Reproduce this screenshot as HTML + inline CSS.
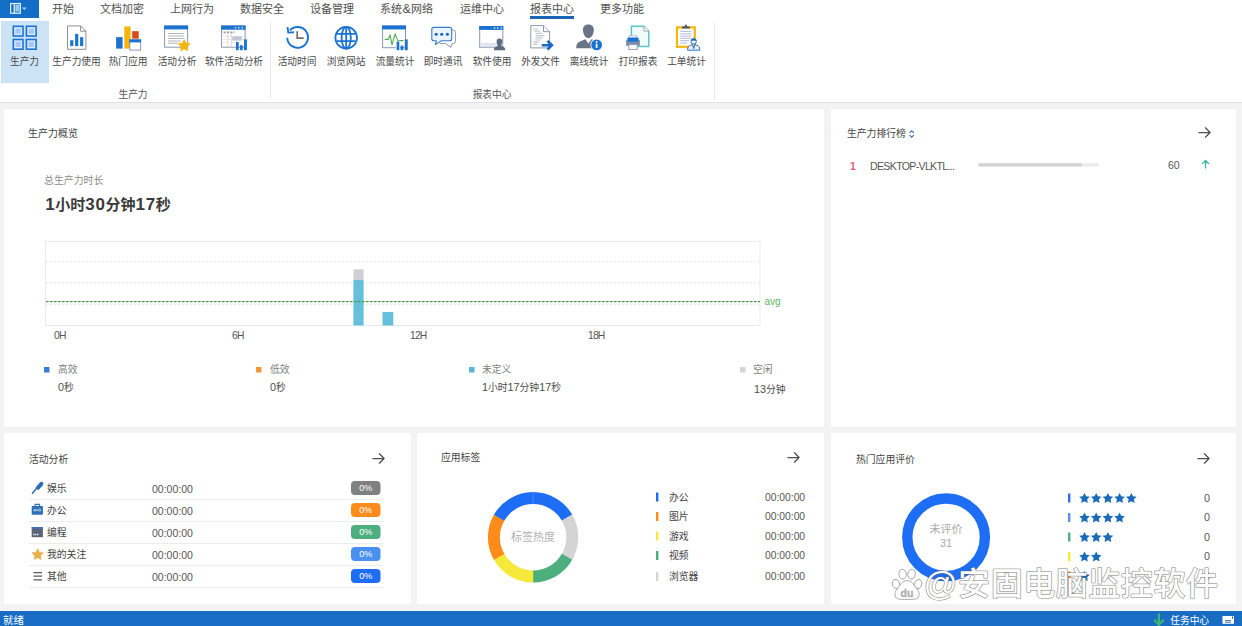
<!DOCTYPE html>
<html lang="zh-CN">
<head>
<meta charset="utf-8">
<title>生产力</title>
<style>
*{box-sizing:border-box;margin:0;padding:0}
html,body{width:1242px;height:626px;overflow:hidden;background:#f3f3f3}
body{position:relative;font-family:"Liberation Sans","Noto Sans CJK SC",sans-serif;color:#444;font-size:10px}
.t{position:absolute;white-space:nowrap;line-height:1}
.c{transform:translateX(-50%)}
.abs{position:absolute}
#menubar{position:absolute;left:0;top:0;width:1242px;height:19px;background:#fff}
#appbtn{position:absolute;left:0;top:0;width:39.3px;height:18.1px;background:#146dc6}
#ribbon{position:absolute;left:0;top:19px;width:1242px;height:83.8px;background:#fff;border-bottom:1px solid #e0e0e0}
.menu{font-size:11px;color:#505050;top:3.5px}
.rl{font-size:9.7px;color:#4a4a4a;top:56.8px}
.gl{font-size:9.7px;color:#555;top:90px}
.panel{position:absolute;background:#fff}
.pt{font-size:10px;color:#444}
#status{position:absolute;left:0;top:611px;width:1242px;height:15px;background:#186cc4}
svg{position:absolute;left:0;top:0;overflow:visible}
.ax{top:331px;font-size:10.3px;letter-spacing:-.8px;color:#555}
.lg{top:365px;font-size:9.8px;color:#808080}
.lv{top:382px;font-size:9.8px;color:#4d4d4d}
.hd{font-size:15px;font-weight:700;color:#3a3a3a;line-height:20px}
.hd b{font-size:17px;letter-spacing:.65px;font-weight:700}
.wm{font-family:"Noto Sans CJK SC",sans-serif;font-size:32px;letter-spacing:.55px;font-weight:500;color:#fff;-webkit-text-stroke:1px rgba(120,120,120,.8);paint-order:stroke fill;text-shadow:0 0 1.5px rgba(0,0,0,.35);line-height:34px}
i{font-style:normal;font-size:1.1em}
</style>
</head>
<body>
<!-- MENUBAR -->
<div id="menubar"></div>
<div id="appbtn"></div>
<div class="t menu" style="left:52px">开始</div>
<div class="t menu" style="left:100px">文档加密</div>
<div class="t menu" style="left:170px">上网行为</div>
<div class="t menu" style="left:240px">数据安全</div>
<div class="t menu" style="left:310px">设备管理</div>
<div class="t menu" style="left:380px">系统<span style="font-size:12.4px;line-height:0;margin:0 .3px 0 .5px">&amp;</span>网络</div>
<div class="t menu" style="left:460px">运维中心</div>
<div class="t menu" style="left:530px">报表中心</div>
<div class="t menu" style="left:600px">更多功能</div>
<div class="abs" style="left:530px;top:16px;width:44px;height:2.7px;background:#1a66b5"></div>
<!-- RIBBON -->
<div id="ribbon"></div>
<div class="abs" style="left:1px;top:21px;width:48px;height:62.4px;background:#cce3f6"></div>
<div class="abs" style="left:270px;top:22px;width:1px;height:78px;background:#ebebeb"></div>
<div class="abs" style="left:714px;top:22px;width:1px;height:78px;background:#ebebeb"></div>
<div class="t rl c" style="left:24.5px">生产力</div>
<div class="t rl c" style="left:76.5px">生产力使用</div>
<div class="t rl c" style="left:128px">热门应用</div>
<div class="t rl c" style="left:177px">活动分析</div>
<div class="t rl c" style="left:234px">软件活动分析</div>
<div class="t rl c" style="left:297px">活动时间</div>
<div class="t rl c" style="left:346px">浏览网站</div>
<div class="t rl c" style="left:395px">流量统计</div>
<div class="t rl c" style="left:443px">即时通讯</div>
<div class="t rl c" style="left:492px">软件使用</div>
<div class="t rl c" style="left:540.5px">外发文件</div>
<div class="t rl c" style="left:589px">离线统计</div>
<div class="t rl c" style="left:638px">打印报表</div>
<div class="t rl c" style="left:686.5px">工单统计</div>
<div class="t gl c" style="left:133px">生产力</div>
<div class="t gl c" style="left:492px">报表中心</div>
<!-- PANELS -->
<div class="panel" style="left:4px;top:109px;width:820px;height:318px"></div>
<div class="panel" style="left:831px;top:109px;width:404.5px;height:318px"></div>
<div class="panel" style="left:4px;top:433px;width:407px;height:171px"></div>
<div class="panel" style="left:417px;top:433px;width:407px;height:171px"></div>
<div class="panel" style="left:831px;top:433px;width:404.5px;height:171.4px"></div>
<!-- STATUS -->
<div id="status"></div>
<div class="t" style="left:3px;top:615px;font-size:10.5px;color:#fff">就绪</div>
<div class="t" style="left:1170.3px;top:615.8px;font-size:9.7px;color:#fff">任务中心</div>
<svg width="1242" height="626" viewBox="0 0 1242 626">
<path d="M1158.9 613.6V624.6M1154.2 619.6L1158.9 625L1163.6 619.6" fill="none" stroke="#3db86f" stroke-width="2.2" stroke-linejoin="miter"/>
<rect x="1222.5" y="616" width="11.5" height="7.8" fill="#fff"/>
<path d="M1225 620.6H1231M1225 622.2H1231" stroke="#1b4f9a" stroke-width=".8"/><rect x="1232" y="616.6" width="1" height="2" fill="#1b3f80"/>
</svg>
<!--P1-->
<div class="t pt" style="left:28px;top:129.2px">生产力概览</div>
<div class="t" style="left:44px;top:176.3px;font-size:9.9px;color:#8c8c8c">总生产力时长</div>
<div class="t hd" style="left:45.2px;top:194.5px"><b>1</b>小时<b>30</b>分钟<b>17</b>秒</div>
<svg width="1242" height="626" viewBox="0 0 1242 626">
<rect x="45.5" y="241.5" width="714.5" height="84" fill="#fff" stroke="#ebebeb" stroke-width="1"/>
<line x1="46" y1="261.8" x2="760" y2="261.8" stroke="#e4e4e4" stroke-width="1" stroke-dasharray="2.2 1.8"/>
<line x1="46" y1="282.9" x2="760" y2="282.9" stroke="#e4e4e4" stroke-width="1" stroke-dasharray="2.2 1.8"/>
<line x1="46" y1="304.3" x2="760" y2="304.3" stroke="#e4e4e4" stroke-width="1" stroke-dasharray="2.2 1.8"/>
<rect x="353.4" y="269.4" width="10.2" height="10.6" fill="#d0d0d4"/>
<rect x="353.4" y="280" width="10.2" height="45.5" fill="#66c0dc"/>
<rect x="382.5" y="312" width="10.8" height="13.5" fill="#66c0dc"/>
<line x1="46" y1="301.5" x2="760" y2="301.5" stroke="#43a047" stroke-width="1.25" stroke-dasharray="2.6 1.4"/>
<rect x="44" y="367" width="5.5" height="5.5" fill="#3a7bd5"/>
<rect x="256" y="367" width="5.5" height="5.5" fill="#f0963c"/>
<rect x="469" y="367" width="5.5" height="5.5" fill="#5ab4d6"/>
<rect x="740" y="367" width="5.5" height="5.5" fill="#d4d4d4"/>
</svg>
<div class="t" style="left:764.5px;top:297.2px;font-size:10px;color:#5cb85c">avg</div>
<div class="t ax" style="left:54px">0H</div>
<div class="t ax" style="left:232px">6H</div>
<div class="t ax" style="left:410px">12H</div>
<div class="t ax" style="left:588px">18H</div>
<div class="t lg" style="left:58px">高效</div>
<div class="t lv" style="left:58px"><i>0</i>秒</div>
<div class="t lg" style="left:270px">低效</div>
<div class="t lv" style="left:270px"><i>0</i>秒</div>
<div class="t lg" style="left:482px">未定义</div>
<div class="t lv" style="left:482px"><i>1</i>小时<i>17</i>分钟<i>17</i>秒</div>
<div class="t lg" style="left:753px">空闲</div>
<div class="t lv" style="left:754px;top:384px"><i>13</i>分钟</div>
<!--P2-->
<div class="t pt" style="left:847px;top:129.2px;font-size:9.8px">生产力排行榜</div>
<div class="t" style="left:850px;top:160.6px;font-size:10.5px;font-weight:700;color:#ea5a86">1</div>
<div class="t" style="left:870px;top:161.2px;font-size:10.6px;letter-spacing:-.68px;color:#555">DESKTOP-VLKTL...</div>
<div class="t" style="left:1168px;top:160.4px;font-size:10.5px;color:#555">60</div>
<svg width="1242" height="626" viewBox="0 0 1242 626">
<g transform="translate(1198.5 132.5)" fill="none" stroke="#4d4d4d" stroke-width="1.25" stroke-linecap="round" stroke-linejoin="round"><path d="M.4 0H11.6M6.9 -4.7L11.6 0L6.9 4.7"/></g>
<path d="M909.6 132.8L911.7 130.7L913.8 132.8M909.6 135.2L911.7 137.3L913.8 135.2" fill="none" stroke="#2b65a8" stroke-width="1.15"/>
<rect x="978" y="163.2" width="121.3" height="3.3" rx="1.65" fill="#ececec"/>
<rect x="978" y="163.2" width="104" height="3.3" rx="1.65" fill="#d2d2d2"/>
<path d="M1205.5 168V160.6M1202.4 163.7L1205.5 160.5L1208.6 163.7" fill="none" stroke="#2bb8a4" stroke-width="1.2" stroke-linecap="round" stroke-linejoin="round"/>
</svg>
<!--P3-->
<div class="t pt" style="left:29px;top:454.7px;font-size:9.8px">活动分析</div>
<svg width="1242" height="626" viewBox="0 0 1242 626">
<g transform="translate(372.5 458.5)" fill="none" stroke="#4d4d4d" stroke-width="1.25" stroke-linecap="round" stroke-linejoin="round"><path d="M.4 0H11.6M6.9 -4.7L11.6 0L6.9 4.7"/></g>
<rect x="29" y="499" width="355" height="1" fill="#ececec"/>
<rect x="351" y="481" width="29.5" height="14" rx="4" fill="#808080"/>
<rect x="29" y="521" width="355" height="1" fill="#ececec"/>
<rect x="351" y="503" width="29.5" height="14" rx="4" fill="#ff8c1a"/>
<rect x="29" y="543" width="355" height="1" fill="#ececec"/>
<rect x="351" y="525" width="29.5" height="14" rx="4" fill="#4caf7d"/>
<rect x="29" y="565" width="355" height="1" fill="#ececec"/>
<rect x="351" y="547" width="29.5" height="14" rx="4" fill="#4a90f0"/>
<rect x="29" y="587" width="355" height="1" fill="#ececec"/>
<rect x="351" y="569" width="29.5" height="14" rx="4" fill="#1e6ef5"/>
</svg>
<div class="t" style="left:47px;top:483.8px;font-size:9.8px;color:#444">娱乐</div>
<div class="t" style="left:152px;top:483.5px;font-size:10.5px;color:#555">00:00:00</div>
<div class="t c" style="left:365.8px;top:483.7px;font-size:9px;color:#fff">0%</div>
<div class="t" style="left:47px;top:505.8px;font-size:9.8px;color:#444">办公</div>
<div class="t" style="left:152px;top:505.5px;font-size:10.5px;color:#555">00:00:00</div>
<div class="t c" style="left:365.8px;top:505.7px;font-size:9px;color:#fff">0%</div>
<div class="t" style="left:47px;top:527.8px;font-size:9.8px;color:#444">编程</div>
<div class="t" style="left:152px;top:527.5px;font-size:10.5px;color:#555">00:00:00</div>
<div class="t c" style="left:365.8px;top:527.7px;font-size:9px;color:#fff">0%</div>
<div class="t" style="left:47px;top:549.8px;font-size:9.8px;color:#444">我的关注</div>
<div class="t" style="left:152px;top:549.5px;font-size:10.5px;color:#555">00:00:00</div>
<div class="t c" style="left:365.8px;top:549.7px;font-size:9px;color:#fff">0%</div>
<div class="t" style="left:47px;top:571.8px;font-size:9.8px;color:#444">其他</div>
<div class="t" style="left:152px;top:571.5px;font-size:10.5px;color:#555">00:00:00</div>
<div class="t c" style="left:365.8px;top:571.7px;font-size:9px;color:#fff">0%</div>
<svg width="1242" height="626" viewBox="0 0 1242 626">
<g id="ic-mic"><path d="M32.4 493.2L38.2 486.6" stroke="#2b6cb8" stroke-width="1.5" stroke-linecap="round"/><path d="M38 487.6L41.4 483.8" stroke="#2b6cb8" stroke-width="4" stroke-linecap="round"/><path d="M35.8 487.2L38.6 489.8" stroke="#2b6cb8" stroke-width="1" /></g>
<g id="ic-case"><rect x="31.7" y="506" width="11.2" height="8.7" rx=".8" fill="#2f6fb5"/><path d="M35 506V504.4H39.6V506" fill="none" stroke="#2f6fb5" stroke-width="1.1"/><path d="M33.6 510.2H41" stroke="#dbe9f8" stroke-width=".8"/><circle cx="35.1" cy="510.2" r="1" fill="#2f6fb5" stroke="#dbe9f8" stroke-width=".7"/><circle cx="39.5" cy="510.2" r="1" fill="#2f6fb5" stroke="#dbe9f8" stroke-width=".7"/></g>
<g id="ic-code"><rect x="31.7" y="527" width="11.2" height="10.2" fill="#5a6478"/><rect x="31.7" y="527" width="11.2" height="1.8" fill="#3f73b8"/><path d="M33 534.6H38.4" stroke="#e8ecf2" stroke-width="1.5" stroke-dasharray="1.4 .6"/></g>
<polygon points="37.70,548.70 39.46,552.27 43.41,552.85 40.55,555.63 41.23,559.55 37.70,557.70 34.17,559.55 34.85,555.63 31.99,552.85 35.94,552.27" fill="#e9b14b" stroke="#e9b14b" stroke-width=".6" stroke-linejoin="round"/>
<path d="M33.5 572.6H42M33.5 576.2H42M33.5 579.8H42" stroke="#5a5a5a" stroke-width="1.3"/>
</svg>
<!--P4-->
<div class="t pt" style="left:441px;top:452.9px;font-size:9.8px">应用标签</div>
<svg width="1242" height="626" viewBox="0 0 1242 626">
<g transform="translate(787.5 457.5)" fill="none" stroke="#4d4d4d" stroke-width="1.25" stroke-linecap="round" stroke-linejoin="round"><path d="M.4 0H11.6M6.9 -4.7L11.6 0L6.9 4.7"/></g>
<path d="M532.98 492.10A45.2 45.2 0 0 1 572.30 514.80L561.90 520.78A33.2 33.2 0 0 0 533.01 504.10Z" fill="#1e6ef5"/>
<path d="M572.19 514.60A45.2 45.2 0 0 1 572.19 560.00L561.81 553.98A33.2 33.2 0 0 0 561.81 520.62Z" fill="#d4d4d4"/>
<path d="M572.30 559.80A45.2 45.2 0 0 1 532.98 582.50L533.01 570.50A33.2 33.2 0 0 0 561.90 553.82Z" fill="#4caf7d"/>
<path d="M533.22 582.50A45.2 45.2 0 0 1 493.90 559.80L504.30 553.82A33.2 33.2 0 0 0 533.19 570.50Z" fill="#f5ea3a"/>
<path d="M494.01 560.00A45.2 45.2 0 0 1 494.01 514.60L504.39 520.62A33.2 33.2 0 0 0 504.39 553.98Z" fill="#ff8c1a"/>
<path d="M493.90 514.80A45.2 45.2 0 0 1 533.22 492.10L533.19 504.10A33.2 33.2 0 0 0 504.30 520.78Z" fill="#1e6ef5"/>
<line x1="533.1" y1="492.1" x2="533.1" y2="504.1" stroke="#6fa3fa" stroke-width=".5"/>
<rect x="656" y="492.5" width="2.4" height="9" fill="#1e6ef5"/>
<rect x="656" y="512.0" width="2.4" height="9" fill="#ff8c1a"/>
<rect x="656" y="531.5" width="2.4" height="9" fill="#f5ea3a"/>
<rect x="656" y="551.0" width="2.4" height="9" fill="#4caf7d"/>
<rect x="656" y="572.0" width="2.4" height="9" fill="#d4d4d4"/>
</svg>
<div class="t c" style="left:533px;top:532.4px;font-size:11px;color:#b2b2b2">标签热度</div>
<div class="t" style="left:669px;top:492.7px;font-size:9.8px;color:#444">办公</div>
<div class="t" style="left:765px;top:492.7px;font-size:10.3px;color:#555">00:00:00</div>
<div class="t" style="left:669px;top:512.2px;font-size:9.8px;color:#444">图片</div>
<div class="t" style="left:765px;top:512.2px;font-size:10.3px;color:#555">00:00:00</div>
<div class="t" style="left:669px;top:531.7px;font-size:9.8px;color:#444">游戏</div>
<div class="t" style="left:765px;top:531.7px;font-size:10.3px;color:#555">00:00:00</div>
<div class="t" style="left:669px;top:551.2px;font-size:9.8px;color:#444">视频</div>
<div class="t" style="left:765px;top:551.2px;font-size:10.3px;color:#555">00:00:00</div>
<div class="t" style="left:669px;top:571.5px;font-size:9.8px;color:#444">浏览器</div>
<div class="t" style="left:765px;top:571.5px;font-size:10.3px;color:#555">00:00:00</div>
<!--P5-->
<div class="t pt" style="left:856px;top:454.5px;font-size:9.8px">热门应用评价</div>
<svg width="1242" height="626" viewBox="0 0 1242 626">
<g transform="translate(1197.5 458.5)" fill="none" stroke="#4d4d4d" stroke-width="1.25" stroke-linecap="round" stroke-linejoin="round"><path d="M.4 0H11.6M6.9 -4.7L11.6 0L6.9 4.7"/></g>
<circle cx="946.1" cy="537.3" r="38.8" fill="none" stroke="#1e6ef5" stroke-width="10.4"/>
<rect x="1068" y="493.5" width="2.4" height="9" fill="#2f6fe0"/>
<polygon points="1084.50,492.90 1086.15,496.23 1089.83,496.77 1087.16,499.37 1087.79,503.03 1084.50,501.30 1081.21,503.03 1081.84,499.37 1079.17,496.77 1082.85,496.23" fill="#1a6bb8"/>
<polygon points="1096.20,492.90 1097.85,496.23 1101.53,496.77 1098.86,499.37 1099.49,503.03 1096.20,501.30 1092.91,503.03 1093.54,499.37 1090.87,496.77 1094.55,496.23" fill="#1a6bb8"/>
<polygon points="1107.90,492.90 1109.55,496.23 1113.23,496.77 1110.56,499.37 1111.19,503.03 1107.90,501.30 1104.61,503.03 1105.24,499.37 1102.57,496.77 1106.25,496.23" fill="#1a6bb8"/>
<polygon points="1119.60,492.90 1121.25,496.23 1124.93,496.77 1122.26,499.37 1122.89,503.03 1119.60,501.30 1116.31,503.03 1116.94,499.37 1114.27,496.77 1117.95,496.23" fill="#1a6bb8"/>
<polygon points="1131.30,492.90 1132.95,496.23 1136.63,496.77 1133.96,499.37 1134.59,503.03 1131.30,501.30 1128.01,503.03 1128.64,499.37 1125.97,496.77 1129.65,496.23" fill="#1a6bb8"/>
<rect x="1068" y="513.0" width="2.4" height="9" fill="#5b8fe8"/>
<polygon points="1084.50,512.40 1086.15,515.73 1089.83,516.27 1087.16,518.87 1087.79,522.53 1084.50,520.80 1081.21,522.53 1081.84,518.87 1079.17,516.27 1082.85,515.73" fill="#1a6bb8"/>
<polygon points="1096.20,512.40 1097.85,515.73 1101.53,516.27 1098.86,518.87 1099.49,522.53 1096.20,520.80 1092.91,522.53 1093.54,518.87 1090.87,516.27 1094.55,515.73" fill="#1a6bb8"/>
<polygon points="1107.90,512.40 1109.55,515.73 1113.23,516.27 1110.56,518.87 1111.19,522.53 1107.90,520.80 1104.61,522.53 1105.24,518.87 1102.57,516.27 1106.25,515.73" fill="#1a6bb8"/>
<polygon points="1119.60,512.40 1121.25,515.73 1124.93,516.27 1122.26,518.87 1122.89,522.53 1119.60,520.80 1116.31,522.53 1116.94,518.87 1114.27,516.27 1117.95,515.73" fill="#1a6bb8"/>
<rect x="1068" y="532.5" width="2.4" height="9" fill="#4caf7d"/>
<polygon points="1084.50,531.90 1086.15,535.23 1089.83,535.77 1087.16,538.37 1087.79,542.03 1084.50,540.30 1081.21,542.03 1081.84,538.37 1079.17,535.77 1082.85,535.23" fill="#1a6bb8"/>
<polygon points="1096.20,531.90 1097.85,535.23 1101.53,535.77 1098.86,538.37 1099.49,542.03 1096.20,540.30 1092.91,542.03 1093.54,538.37 1090.87,535.77 1094.55,535.23" fill="#1a6bb8"/>
<polygon points="1107.90,531.90 1109.55,535.23 1113.23,535.77 1110.56,538.37 1111.19,542.03 1107.90,540.30 1104.61,542.03 1105.24,538.37 1102.57,535.77 1106.25,535.23" fill="#1a6bb8"/>
<rect x="1068" y="552.0" width="2.4" height="9" fill="#f5ea3a"/>
<polygon points="1084.50,551.40 1086.15,554.73 1089.83,555.27 1087.16,557.87 1087.79,561.53 1084.50,559.80 1081.21,561.53 1081.84,557.87 1079.17,555.27 1082.85,554.73" fill="#1a6bb8"/>
<polygon points="1096.20,551.40 1097.85,554.73 1101.53,555.27 1098.86,557.87 1099.49,561.53 1096.20,559.80 1092.91,561.53 1093.54,557.87 1090.87,555.27 1094.55,554.73" fill="#1a6bb8"/>
<rect x="1068" y="571.5" width="2.4" height="9" fill="#ff8c1a"/>
<polygon points="1084.50,570.90 1086.15,574.23 1089.83,574.77 1087.16,577.37 1087.79,581.03 1084.50,579.30 1081.21,581.03 1081.84,577.37 1079.17,574.77 1082.85,574.23" fill="#1a6bb8"/>
</svg>
<div class="t c" style="left:946px;top:523.5px;font-size:11px;color:#aaa">未评价</div>
<div class="t c" style="left:946px;top:538px;font-size:11px;color:#aaa">31</div>
<div class="t" style="left:1204px;top:492.9px;font-size:10.8px;color:#555">0</div>
<div class="t" style="left:1204px;top:512.4px;font-size:10.8px;color:#555">0</div>
<div class="t" style="left:1204px;top:531.9px;font-size:10.8px;color:#555">0</div>
<div class="t" style="left:1204px;top:551.4px;font-size:10.8px;color:#555">0</div>
<div class="t" style="left:1204px;top:570.9px;font-size:10.8px;color:#555">0</div>
<!--ICONS-->
<svg width="1242" height="626" viewBox="0 0 1242 626">
<g id="appicon"><rect x="10.6" y="3.5" width="9.8" height="9.8" fill="#3d8fdc" stroke="#e6f3ff" stroke-width="1.1"/>
<rect x="11.6" y="4.6" width="1.6" height="7.6" fill="#2a68b0"/><line x1="14.3" y1="3.5" x2="14.3" y2="13.3" stroke="#e6f3ff" stroke-width="1.1"/>
<rect x="15.6" y="5" width="3.8" height="6.4" fill="#b9dcff" opacity=".75"/>
<path d="M21.9 7.6H26.7L24.3 10.1Z" fill="#9fd2ff"/></g>
<rect x="13.3" y="26.3" width="9.7" height="9.7" fill="#d9ecff" stroke="#1a73d1" stroke-width="1.6"/><rect x="15.5" y="28.5" width="5.3" height="5.3" fill="#a9c4f5"/>
<rect x="26.400000000000002" y="26.3" width="9.7" height="9.7" fill="#d9ecff" stroke="#1a73d1" stroke-width="1.6"/><rect x="28.6" y="28.5" width="5.3" height="5.3" fill="#a9c4f5"/>
<rect x="13.3" y="39.5" width="9.7" height="9.7" fill="#d9ecff" stroke="#1a73d1" stroke-width="1.6"/><rect x="15.5" y="41.7" width="5.3" height="5.3" fill="#a9c4f5"/>
<rect x="26.400000000000002" y="39.5" width="9.7" height="9.7" fill="#d9ecff" stroke="#1a73d1" stroke-width="1.6"/><rect x="28.6" y="41.7" width="5.3" height="5.3" fill="#a9c4f5"/>
<path d="M67.5 25.9H80.6L85.9 31.2V49.3H67.5Z" fill="#fff" stroke="#8f8f8f" stroke-width="1"/><path d="M80.6 25.9V31.2H85.9" fill="none" stroke="#8f8f8f" stroke-width="1"/>
<rect x="70.2" y="40.2" width="3.1" height="5.9" fill="#1a73d1"/><rect x="75.1" y="33.9" width="3.2" height="12.2" fill="#1a73d1"/><rect x="80.1" y="37.1" width="3.1" height="9" fill="#1a73d1"/>
<rect x="116.1" y="37.1" width="6.5" height="11.5" fill="#1a73d1"/><rect x="124.3" y="26.4" width="6.3" height="22.2" fill="#f7b50c"/><rect x="132.2" y="31.2" width="6.5" height="7.5" fill="#d9491a"/>
<rect x="129.8" y="39.9" width="10.8" height="10.2" fill="#fff" stroke="#8a98b2" stroke-width="1"/><rect x="129.3" y="39.4" width="11.8" height="3" fill="#1a73d1"/>
<rect x="164.6" y="26" width="23" height="21.2" fill="#fff" stroke="#8a98b2" stroke-width="1"/><rect x="164.1" y="25.5" width="24" height="3.9" fill="#1a73d1"/>
<path d="M168 33.5H183.8M168 36H183.8M168 38.5H183.8M168 41H181M168 43.2H178" stroke="#b4b4b8" stroke-width="1" fill="none"/>
<polygon points="184.20,39.30 186.08,43.11 190.29,43.72 187.24,46.69 187.96,50.88 184.20,48.90 180.44,50.88 181.16,46.69 178.11,43.72 182.32,43.11" fill="#f7b50c" stroke="#f7b50c" stroke-width=".5" stroke-linejoin="round"/>
<rect x="221.6" y="26" width="23.5" height="21.2" fill="#fff" stroke="#8a98b2" stroke-width="1"/><rect x="221.1" y="25.5" width="24.5" height="4.2" fill="#1a73d1"/>
<circle cx="235.6" cy="27.7" r=".8" fill="#fff"/><circle cx="238.8" cy="27.7" r=".8" fill="#fff"/><circle cx="242.2" cy="27.7" r=".8" fill="#fff"/>
<path d="M223.5 32.4H234.5" stroke="#9a9aa2" stroke-width="1.8" stroke-dasharray="2.2 1.2"/>
<path d="M227.6 34V46.5M231.4 34V46.5" stroke="#f0c8c0" stroke-width=".8"/>
<path d="M223 36.5H244M223 39.5H244M223 42.5H235" stroke="#e0e0e6" stroke-width=".7"/>
<rect x="232.2" y="36.4" width="9.7" height="4.2" fill="#c4c8d4"/>
<rect x="236" y="41.9" width="2.7" height="8.3" fill="#1a73d1"/><rect x="239.9" y="45.2" width="2.8" height="5" fill="#1a73d1"/><rect x="244" y="39.4" width="2.9" height="10.8" fill="#1a73d1"/>
<path d="M287.21 37.76A10.4 10.4 0 1 0 289.87 30.44" fill="none" stroke="#1a73d1" stroke-width="1.9"/>
<path d="M287.5 27.2L288.3 32.6L294 32.2" fill="none" stroke="#1a73d1" stroke-width="1.9" stroke-linejoin="miter"/>
<path d="M297.2 31.2V38.1H303.7" fill="none" stroke="#6e6e6e" stroke-width="1.7"/>
<g fill="none" stroke="#1a73d1" stroke-width="1.8"><circle cx="346.2" cy="37.7" r="10.8"/><ellipse cx="346.2" cy="37.7" rx="4.6" ry="10.8"/><path d="M346.2 26.9V48.5M337 33.9H355.4M337 41.2H355.4"/></g>
<rect x="382.6" y="26" width="22.9" height="21.7" fill="#fff" stroke="#8a98b2" stroke-width="1"/><rect x="382.1" y="25.5" width="23.9" height="3.9" fill="#1a73d1"/>
<path d="M384.7 39.4H388.4L390.1 34.8L392 44.8L395.1 33.9L397.6 40.6H403.5" fill="none" stroke="#4caf50" stroke-width="1.1" stroke-linejoin="round"/>
<rect x="395.8" y="40.8" width="4.2" height="9.6" fill="#fff"/>
<rect x="396.6" y="41.5" width="2.7" height="8.7" fill="#1a73d1"/><rect x="400.6" y="45.6" width="2.7" height="4.6" fill="#1a73d1"/><rect x="404.8" y="39.4" width="2.9" height="10.8" fill="#1a73d1"/>
<path d="M452.3 30.2H453.4Q455.4 30.2 455.4 32.2V41.6Q455.4 43.6 453.4 43.6H452.2L450.9 47.4L445.6 43.6H440" fill="none" stroke="#8a98b2" stroke-width="1"/>
<path d="M433.8 27.4H449.7Q451.7 27.4 451.7 29.4V38.8Q451.7 40.8 449.7 40.8H441.5L435.4 44.6L436.3 40.8H433.8Q431.8 40.8 431.8 38.8V29.4Q431.8 27.4 433.8 27.4Z" fill="#eaf4ff" stroke="#3b7acb" stroke-width="1.1" stroke-linejoin="round"/>
<circle cx="436.2" cy="34.3" r="1.55" fill="#1b62c0"/><circle cx="441.7" cy="34.3" r="1.55" fill="#1b62c0"/><circle cx="447.4" cy="34.3" r="1.55" fill="#1b62c0"/>
<rect x="479.7" y="26.5" width="23.1" height="20.7" fill="#fff" stroke="#8a98b2" stroke-width="1"/><rect x="479.2" y="26" width="24.1" height="3.9" fill="#1a73d1"/>
<circle cx="494.5" cy="28" r=".8" fill="#fff"/><circle cx="497.7" cy="28" r=".8" fill="#fff"/><circle cx="501.2" cy="28" r=".8" fill="#fff"/>
<rect x="480.2" y="42.7" width="22.1" height="3.3" fill="#e2e6ee"/>
<path d="M499.5 38.4C501.6 38.4 502.6 40 502.4 41.9C502.2 43.6 501.6 44.4 501.2 45.2C501.2 46 502 46.4 503.2 46.8C504.6 47.3 505.2 48.2 505.2 50.3H493.8C493.8 48.2 494.4 47.3 495.8 46.8C497 46.4 497.8 46 497.8 45.2C497.4 44.4 496.8 43.6 496.6 41.9C496.4 40 497.4 38.4 499.5 38.4Z" fill="#5f6b7c"/>
<path d="M530.8 25.6H543.5L549.6 31.7V47.9H530.8Z" fill="#fff" stroke="#8a98b2" stroke-width="1"/><path d="M543.5 25.6V31.7H549.6" fill="#f4f6fa" stroke="#8a98b2" stroke-width="1"/>
<path d="M533.2 29H538M534.4 31.2H540M535.6 33.4H542.5M535.6 35.6H544.5M535.6 37.8H543M534.4 40H541M533.2 42.2H539M533.2 44.4H537.5" stroke="#c6c6cc" stroke-width="1.2" fill="none"/>
<path d="M541.8 45.2H551.4M547.4 40.9L551.9 45.2L547.4 49.5" fill="none" stroke="#1668c4" stroke-width="2.6"/>
<path d="M588.4 24.6C592.4 24.6 594 27 593.8 30.4C593.6 34 591.4 38 588.4 38C585.4 38 583.2 34 583 30.4C582.8 27 584.4 24.6 588.4 24.6Z" fill="#6b7487"/>
<path d="M576.3 48.3C576.3 44 577.6 42.2 580.6 41.2L585.3 39.2L588.4 43.6L591.5 39.2L596.2 41.2C599.2 42.2 600.5 44 600.5 48.3Z" fill="#6b7487"/>
<circle cx="596.6" cy="44.9" r="6.2" fill="#fff"/><circle cx="596.6" cy="44.9" r="5.4" fill="#1a73d1"/>
<circle cx="596.6" cy="42" r=".95" fill="#fff"/><rect x="595.75" y="43.7" width="1.7" height="4.3" fill="#fff"/>
<path d="M631.4 26.2H644L648.8 31V46.6H631.4Z" fill="#f2fbfb" stroke="#5fc4c4" stroke-width="1.5"/><path d="M644 26.2V31H648.8" fill="#fff" stroke="#9aa4ac" stroke-width="1"/>
<rect x="629.2" y="35.8" width="7.6" height="3" fill="#fff" stroke="#a8b4c4" stroke-width=".8"/>
<rect x="626.1" y="39.4" width="13.8" height="6.6" rx="1" fill="#7f8ea8"/>
<rect x="627.6" y="37.4" width="10.8" height="4.4" rx=".8" fill="#1a73d1"/>
<rect x="628.8" y="44.6" width="8.4" height="4.8" fill="#fff" stroke="#8a98b2" stroke-width=".9"/>
<rect x="677" y="27.4" width="17.8" height="19.4" fill="#fff" stroke="#f7b50c" stroke-width="2.2"/>
<path d="M680.2 31.4H691.5M680.2 33.9H691.5M680.2 36.1H691.5M680.2 38.3H691.5M680.2 40.6H689M680.2 43H687" stroke="#a9b6d6" stroke-width=".9" fill="none"/>
<path d="M682 28.6V26.6H684.6Q684.9 24.4 685.9 24.4Q686.9 24.4 687.2 26.6H689.8V28.6Z" fill="#4a5670"/>
<path d="M687.6 50.2C687.6 47 688.6 45.8 690.6 45.2L692.4 44.5L693.7 48.6L695 44.5L696.8 45.2C698.8 45.8 699.8 47 699.8 50.2Z" fill="#e3f1ff" stroke="#1e67c2" stroke-width=".9" stroke-linejoin="round"/>
<circle cx="693.7" cy="41.4" r="2.7" fill="#e3f1ff" stroke="#1e67c2" stroke-width=".9"/><path d="M691 41C691 39.4 692.2 38.6 693.7 38.6C695.2 38.6 696.4 39.4 696.4 41C695 40.2 692.4 40.2 691 41Z" fill="#1e67c2"/>
</svg>
<!--WM-->
<svg width="1242" height="626" viewBox="0 0 1242 626">
<g fill="#fff" stroke="#9a9a9a" stroke-width=".9" opacity=".92">
<ellipse cx="896" cy="584" rx="3.6" ry="4.6" transform="rotate(-18 896 584)"/>
<ellipse cx="902.6" cy="574.2" rx="3.7" ry="4.9" transform="rotate(-6 902.6 574.2)"/>
<ellipse cx="911.6" cy="574.2" rx="3.7" ry="4.9" transform="rotate(8 911.6 574.2)"/>
<ellipse cx="918.2" cy="584" rx="3.6" ry="4.6" transform="rotate(20 918.2 584)"/>
<path d="M907 580.6C911.6 580.6 913.4 584.6 916.2 588C918.8 591.2 920 594.2 918.4 597C916.8 599.8 913 599.4 907 599.4C901 599.4 897.2 599.8 895.6 597C894 594.2 895.2 591.2 897.8 588C900.6 584.6 902.4 580.6 907 580.6Z"/>
</g>
<text x="907" y="596.6" text-anchor="middle" font-family="Liberation Sans, sans-serif" font-weight="700" font-size="10.5" fill="#b4b4b4" stroke="#a2a2a2" stroke-width=".3">du</text>
</svg>
<div class="t wm" style="left:923.5px;top:563.8px"><span style="font-family:'Liberation Sans',sans-serif;font-size:33.5px;letter-spacing:.6px">@</span>安固电脑监控软件</div>
</body>
</html>
